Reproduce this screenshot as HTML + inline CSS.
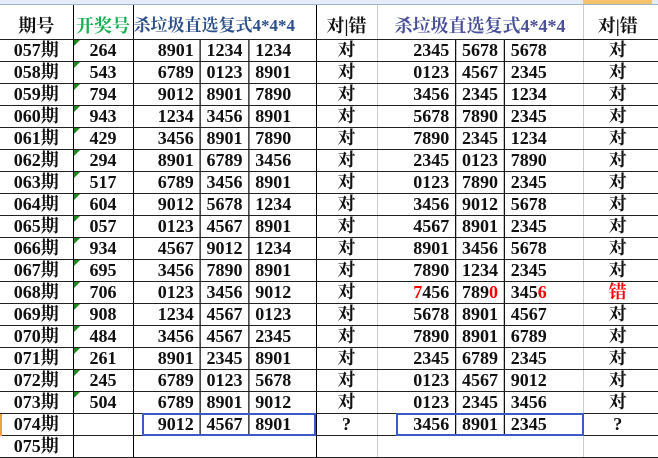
<!DOCTYPE html>
<html><head><meta charset="utf-8"><style>
body{margin:0;width:658px;height:451px;overflow:hidden;background:#fff;position:relative;font-family:"Liberation Serif","Noto Serif CJK SC",serif;}
.top{position:absolute;left:0;top:0;width:658px;height:4px;background:#e4ecf7;border-bottom:1px solid #9eb6ce;}
table{position:absolute;left:0;top:5px;border-collapse:collapse;table-layout:fixed;}
td{height:21px;border-bottom:1px solid #222;padding:0;text-align:center;font-size:18px;font-weight:bold;color:#111;white-space:nowrap;overflow:hidden;line-height:21px;position:relative;}
tr.h td{height:34px;line-height:22px;vertical-align:bottom;padding-bottom:2px;box-sizing:border-box;font-family:"Liberation Serif","Noto Serif CJK SC",serif;font-size:18px;}
.c1{border-right:1px solid #000;}
.c2{border-right:1px solid #000;}
.c3{border-right:1px solid #000;}
.c4{border-right:1px solid #ccc;}
.c5{border-right:1px solid #ccc;}
.g:before{content:"";position:absolute;left:0;top:0;border-top:6px solid #1e8a1e;border-right:6px solid transparent;}
.r{color:#f00}
.box{position:absolute;border:2px solid #3a5bc7;height:19px;top:413px;}
</style></head><body>
<div class="top"></div>
<div style="position:absolute;left:583px;top:0;width:69px;height:4px;background:#f5c26b"></div>
<table>
<colgroup><col style="width:73px"><col style="width:60px"><col style="width:183px"><col style="width:61px"><col style="width:206px"><col style="width:69px"><col style="width:6px"></colgroup>
<tr class="h"><td class="c1">期号</td><td class="c2" style="color:#16b050">开奖号</td><td class="c3" style="color:#2b4f8a;font-size:17px;text-align:left">杀垃圾直选复式4*4*4</td><td class="c4">对|错</td><td class="c5" style="color:#4a4f9a">杀垃圾直选复式4*4*4</td><td class="c6">对|错</td><td></td></tr>
<tr><td class="c1">057期</td><td class="c2 g">264</td><td class="c3">8901│1234│1234</td><td class="c4">对</td><td class="c5">2345│5678│5678</td><td>对</td><td></td></tr>
<tr><td class="c1">058期</td><td class="c2 g">543</td><td class="c3">6789│0123│8901</td><td class="c4">对</td><td class="c5">0123│4567│2345</td><td>对</td><td></td></tr>
<tr><td class="c1">059期</td><td class="c2 g">794</td><td class="c3">9012│8901│7890</td><td class="c4">对</td><td class="c5">3456│2345│1234</td><td>对</td><td></td></tr>
<tr><td class="c1">060期</td><td class="c2 g">943</td><td class="c3">1234│3456│8901</td><td class="c4">对</td><td class="c5">5678│7890│2345</td><td>对</td><td></td></tr>
<tr><td class="c1">061期</td><td class="c2 g">429</td><td class="c3">3456│8901│7890</td><td class="c4">对</td><td class="c5">7890│2345│1234</td><td>对</td><td></td></tr>
<tr><td class="c1">062期</td><td class="c2 g">294</td><td class="c3">8901│6789│3456</td><td class="c4">对</td><td class="c5">2345│0123│7890</td><td>对</td><td></td></tr>
<tr><td class="c1">063期</td><td class="c2 g">517</td><td class="c3">6789│3456│8901</td><td class="c4">对</td><td class="c5">0123│7890│2345</td><td>对</td><td></td></tr>
<tr><td class="c1">064期</td><td class="c2 g">604</td><td class="c3">9012│5678│1234</td><td class="c4">对</td><td class="c5">3456│9012│5678</td><td>对</td><td></td></tr>
<tr><td class="c1">065期</td><td class="c2 g">057</td><td class="c3">0123│4567│8901</td><td class="c4">对</td><td class="c5">4567│8901│2345</td><td>对</td><td></td></tr>
<tr><td class="c1">066期</td><td class="c2 g">934</td><td class="c3">4567│9012│1234</td><td class="c4">对</td><td class="c5">8901│3456│5678</td><td>对</td><td></td></tr>
<tr><td class="c1">067期</td><td class="c2 g">695</td><td class="c3">3456│7890│8901</td><td class="c4">对</td><td class="c5">7890│1234│2345</td><td>对</td><td></td></tr>
<tr><td class="c1">068期</td><td class="c2 g">706</td><td class="c3">0123│3456│9012</td><td class="c4">对</td><td class="c5"><span class="r">7</span>456│789<span class="r">0</span>│345<span class="r">6</span></td><td class="r">错</td><td></td></tr>
<tr><td class="c1">069期</td><td class="c2 g">908</td><td class="c3">1234│4567│0123</td><td class="c4">对</td><td class="c5">5678│8901│4567</td><td>对</td><td></td></tr>
<tr><td class="c1">070期</td><td class="c2 g">484</td><td class="c3">3456│4567│2345</td><td class="c4">对</td><td class="c5">7890│8901│6789</td><td>对</td><td></td></tr>
<tr><td class="c1">071期</td><td class="c2 g">261</td><td class="c3">8901│2345│8901</td><td class="c4">对</td><td class="c5">2345│6789│2345</td><td>对</td><td></td></tr>
<tr><td class="c1">072期</td><td class="c2 g">245</td><td class="c3">6789│0123│5678</td><td class="c4">对</td><td class="c5">0123│4567│9012</td><td>对</td><td></td></tr>
<tr><td class="c1">073期</td><td class="c2 g">504</td><td class="c3">6789│8901│9012</td><td class="c4">对</td><td class="c5">0123│2345│3456</td><td>对</td><td></td></tr>
<tr><td class="c1">074期</td><td class="c2"></td><td class="c3">9012│4567│8901</td><td class="c4">?</td><td class="c5">3456│8901│2345</td><td>?</td><td></td></tr>
<tr><td class="c1">075期</td><td class="c2"></td><td class="c3"></td><td class="c4"></td><td class="c5"></td><td></td><td></td></tr>
</table>
<div class="box" style="left:142px;width:170px"></div>
<div class="box" style="left:396px;width:184px"></div>
<div style="position:absolute;left:0;top:414px;width:2px;height:22px;background:#f0a040"></div>
</body></html>
